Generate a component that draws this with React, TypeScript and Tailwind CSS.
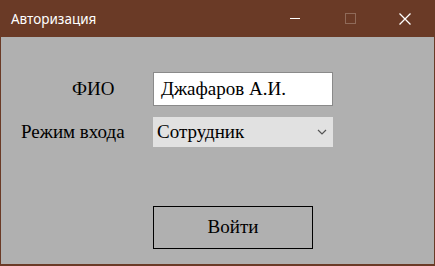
import React from "react";

export default function App() {
  return (
    <div className="w-[435px] h-[266px] flex flex-col bg-[#6a3a26] overflow-hidden">
      <div className="h-[37px] flex items-center shrink-0">
        <span className="ml-[11px] mt-[2px] text-[13.5px] text-white font-['Noto_Sans',sans-serif]">
          Авторизация
        </span>
        <div className="ml-auto flex items-center h-full gap-[9px] mr-[7px]">
          <div className="w-[46px] h-full flex items-center justify-center">
            <div className="w-[10px] h-px bg-white" />
          </div>
          <div className="w-[46px] h-full flex items-center justify-center">
            <div className="w-[11px] h-[11px] border border-[#8f6a59]" />
          </div>
          <div className="w-[46px] h-full flex items-center justify-center">
            <svg width="12" height="12" viewBox="0 0 12 12">
              <path d="M0.5 0.5 L11.5 11.5 M11.5 0.5 L0.5 11.5" stroke="white" strokeWidth="1.3" />
            </svg>
          </div>
        </div>
      </div>
      <div className="flex-1 mx-px mb-[2px] bg-[#b0b0b0] flex flex-col font-['Liberation_Serif',serif] text-[19px] text-black">
        <div className="flex items-center mt-[35px]">
          <span className="w-[152px] pl-[71px]">ФИО</span>
          <div className="w-[180px] h-[34px] bg-white border border-[#8a8a8a] flex items-center pl-[7px]">
            Джафаров А.И.
          </div>
        </div>
        <div className="flex items-center mt-[11px]">
          <span className="w-[152px] pl-[20px]">Режим входа</span>
          <div className="w-[180px] h-[30px] bg-[#e1e1e1] flex items-center pl-[4px] pr-[6px]">
            <span>Сотрудник</span>
            <svg className="ml-auto" width="10" height="6" viewBox="0 0 10 6">
              <path d="M1 1 L5 5 L9 1" stroke="#555" strokeWidth="1.2" fill="none" />
            </svg>
          </div>
        </div>
        <div className="flex mt-[59px] pl-[152px]">
          <div className="w-[160px] h-[43px] border border-black flex items-center justify-center">
            Войти
          </div>
        </div>
      </div>
    </div>
  );
}
